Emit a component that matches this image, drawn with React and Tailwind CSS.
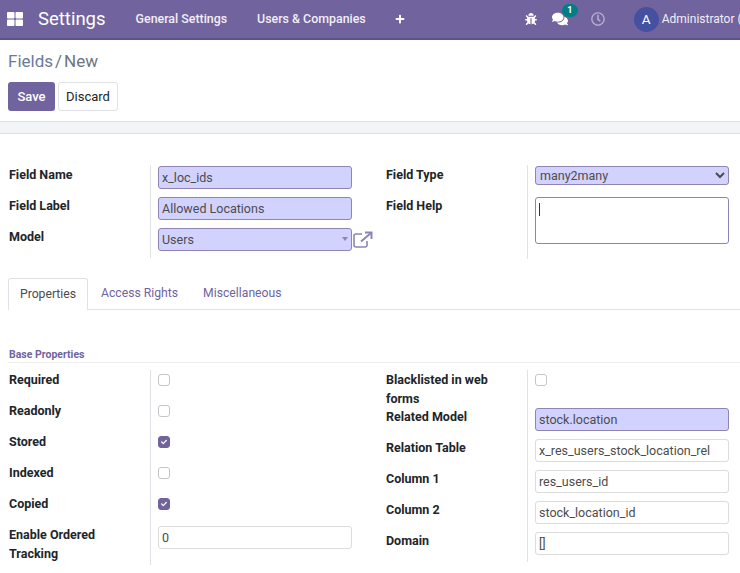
import { FaThLarge, FaPlus, FaBug, FaComments, FaRegClock, FaCheck } from 'react-icons/fa';

const INPUT = 'block h-[23px] w-[194px] rounded-[3px] border px-[3px] text-[12.5px] leading-none text-[#4c4c4c] outline-none';
const REQUIRED = 'border-[#8f84b4] bg-[#d2d2ff]';
const PLAIN = 'border-[#dcdcdc] bg-white';

function Label({ children }) {
  return <div className="pl-[1px] pr-[16px] pt-[1px] text-[12.5px] font-bold leading-[18.5px] text-[#212529]">{children}</div>;
}

function TextField({ value, required }) {
  return <input readOnly value={value} className={`${INPUT} ${required ? REQUIRED : PLAIN}`} />;
}

function Check({ checked }) {
  return (
    <div className="flex h-[17px] items-center">
      <span
        className={`flex h-[12px] w-[12px] items-center justify-center rounded-[3px] border ${
          checked ? 'border-[#71639e] bg-[#71639e]' : 'border-[#c4c6cc] bg-white'
        }`}
      >
        {checked && <FaCheck size={6} color="#fff" />}
      </span>
    </div>
  );
}

// label cell + value cell, the divider is the border of the value column
function Row({ label, children, h = 'h-[31px]' }) {
  return (
    <div className={`flex ${h}`}>
      <div className="w-[142px] shrink-0">
        <Label>{label}</Label>
      </div>
      <div className="relative flex-1 border-l border-[#dee2e6] pl-[7px] pt-[1px]">{children}</div>
    </div>
  );
}

export default function App() {
  return (
    <div className="h-[573px] w-[740px] overflow-hidden bg-white font-['Roboto',sans-serif] text-[#212529]">
      {/* Navbar */}
      <nav className="flex h-[40px] items-center overflow-hidden border-b-2 border-[#5f5287] bg-[#71639e] text-white">
        <FaThLarge size={16} className="ml-[7px] shrink-0" />
        <span className="ml-[15px] shrink-0 text-[18.5px] leading-none">Settings</span>
        <span className="ml-[30px] shrink-0 text-[12.4px] font-medium text-[#f0eef6]">General Settings</span>
        <span className="ml-[30px] shrink-0 text-[12.4px] font-medium text-[#f0eef6]">Users &amp; Companies</span>
        <FaPlus size={10} className="ml-[29px] shrink-0" />
        <FaBug size={12} className="ml-[120px] shrink-0" />
        <div className="relative ml-[15px] shrink-0">
          <FaComments size={16} />
          <span className="absolute left-[10px] top-[-7px] flex h-[13px] w-[16px] items-center justify-center rounded-full bg-[#017e84] text-[9px] font-bold leading-none">
            1
          </span>
        </div>
        <FaRegClock size={14} className="ml-[23px] shrink-0 text-[#b9b2d0]" />
        <span className="ml-[29px] flex h-[25px] w-[25px] shrink-0 items-center justify-center rounded-full bg-[#4650a0] text-[13.5px]">
          A
        </span>
        <span className="ml-[3px] shrink-0 whitespace-nowrap text-[12px] text-[#f0eef6]">Administrator (admin)</span>
      </nav>

      {/* Control panel */}
      <div className="h-[81px] px-[8px] pt-[11px]">
        <div className="text-[17px] leading-[21px] text-[#6b7a96]">
          Fields<span className="ml-[2px] text-[#6c757d]">/</span>
          <span className="ml-[2px] text-[#6c757d]">New</span>
        </div>
        <div className="mt-[10px] flex gap-[3px]">
          <button className="h-[29px] w-[47px] rounded-[3px] bg-[#71639e] text-[13px] font-medium text-white">Save</button>
          <button className="h-[29px] w-[60px] rounded-[3px] border border-[#dee2e6] bg-white text-[13px] text-[#212529]">
            Discard
          </button>
        </div>
      </div>
      <div className="h-[13px] border-y border-[#e0e0e2] bg-[#f3f4f5]" />

      {/* Form */}
      <div className="px-[8px] pt-[31px]">
        <div className="flex gap-[13px]">
          <div className="w-[364px]">
            <Row label="Field Name">
              <TextField value="x_loc_ids" required />
            </Row>
            <Row label="Field Label">
              <TextField value="Allowed Locations" required />
            </Row>
            <Row label="Model">
              <TextField value="Users" required />
              <span className="absolute left-[191px] top-[10px] h-0 w-0 border-x-[3.5px] border-t-[4px] border-x-transparent border-t-[#8f84b4]" />
              <svg
                width="20"
                height="17"
                viewBox="0 0 20 17"
                fill="none"
                stroke="#8f84b4"
                strokeWidth="1.6"
                className="absolute left-[202px] top-[4px]"
              >
                <path d="M9 3H3a2 2 0 0 0-2 2v9a2 2 0 0 0 2 2h9a2 2 0 0 0 2-2v-4" />
                <path d="M8 10.5 18 2" strokeWidth="2" />
                <path d="M12 1.5h6.5V8" strokeWidth="2" />
              </svg>
            </Row>
          </div>
          <div className="w-[344px]">
            <Row label="Field Type">
              <select
                defaultValue="many2many"
                className="block h-[19px] w-[194px] rounded-[3px] border border-[#8f84b4] bg-[#d2d2ff] pl-0 text-[12.5px] leading-none text-[#4c4c4c] outline-none"
              >
                <option>many2many</option>
              </select>
            </Row>
            <Row label="Field Help" h="h-[63px]">
              <div className="relative h-[47px] w-[194px] rounded-[3px] border border-[#8f84b4] bg-white">
                <span className="absolute left-[3px] top-[5px] h-[13px] w-[1px] bg-[#333]" />
              </div>
            </Row>
          </div>
        </div>

        {/* Tabs */}
        <div className="-mr-[8px] mt-[19px] flex h-[32px] border-b border-[#dee2e6] text-[12.2px]">
          <div className="h-[32px] w-[80px] rounded-t-[3px] border border-b-0 border-[#dee2e6] bg-white pt-[6px] text-center text-[#4c4c4c]">
            Properties
          </div>
          <div className="ml-[13px] pt-[6px] text-[#71639e]">Access Rights</div>
          <div className="ml-[25px] pt-[6px] text-[#71639e]">Miscellaneous</div>
        </div>

        {/* Base Properties */}
        <div className="-mr-[8px] mt-[38px] h-[15px] border-b border-[#eeeeee] pl-[1px] text-[10.5px] font-bold leading-[14px] text-[#71639e]">
          Base Properties
        </div>
        <div className="mt-[7px] flex gap-[13px]">
          <div className="w-[364px]">
            <Row label="Required">
              <Check />
            </Row>
            <Row label="Readonly">
              <Check />
            </Row>
            <Row label="Stored">
              <Check checked />
            </Row>
            <Row label="Indexed">
              <Check />
            </Row>
            <Row label="Copied">
              <Check checked />
            </Row>
            <Row label="Enable Ordered Tracking" h="h-[40px]">
              <TextField value="0" />
            </Row>
          </div>
          <div className="w-[344px]">
            <Row label="Blacklisted in web forms" h="h-[37px]">
              <Check />
            </Row>
            <Row label="Related Model">
              <TextField value="stock.location" required />
            </Row>
            <Row label="Relation Table">
              <TextField value="x_res_users_stock_location_rel" />
            </Row>
            <Row label="Column 1">
              <TextField value="res_users_id" />
            </Row>
            <Row label="Column 2">
              <TextField value="stock_location_id" />
            </Row>
            <Row label="Domain">
              <TextField value="[]" />
            </Row>
          </div>
        </div>
      </div>
    </div>
  );
}
